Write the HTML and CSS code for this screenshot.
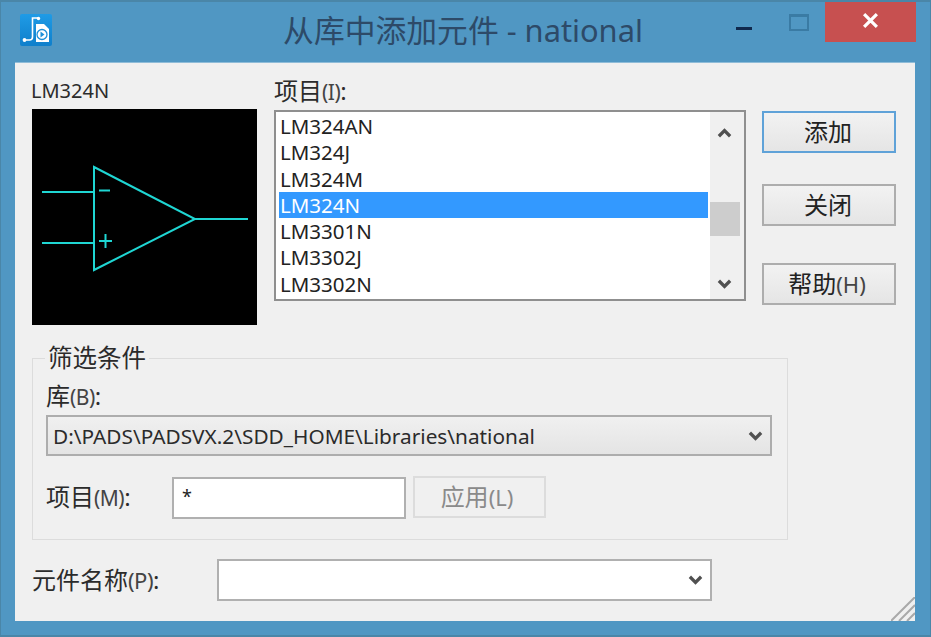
FILE: index.html
```html
<!DOCTYPE html>
<html lang="zh">
<head>
<meta charset="utf-8">
<title>从库中添加元件 - national</title>
<link rel="stylesheet" href="styles.css">
</head>
<body>
<div class="window">
  <header class="titlebar">
    <svg class="app-icon" viewBox="0 0 32 32" aria-hidden="true">
      <defs><linearGradient id="ig" x1="0" y1="0" x2="0" y2="1"><stop offset="0" stop-color="#1f9be6"/><stop offset="1" stop-color="#0f7fcb"/></linearGradient></defs>
      <rect width="32" height="32" rx="2" fill="url(#ig)"/>
      <path d="M18 4h-5.500v19q0 3-3 3H5" fill="none" stroke="#fff" stroke-width="1.600"/>
      <circle cx="18.500" cy="4.500" r="1.700" fill="#fff"/><circle cx="4.500" cy="26" r="1.900" fill="#fff"/>
      <path d="M16 10h8l5 5v13H16z" fill="#fff"/>
      <circle cx="22" cy="20.500" r="5" fill="none" stroke="#1c8fd8" stroke-width="1.300"/>
      <path d="M20.500 17.500l4 3-4 3z" fill="#1c8fd8"/>
    </svg>
    <h1 class="title">从库中添加元件 - national</h1>
    <div class="controls">
      <span class="ctl-min"></span>
      <span class="ctl-max"></span>
      <span class="ctl-close">
        <svg viewBox="0 0 16 14" width="17" height="15" aria-hidden="true"><path d="M2 1l12 12M14 1L2 13" stroke="#fff" stroke-width="3" fill="none"/></svg>
      </span>
    </div>
  </header>
  <main class="client">
    <section class="top">
      <div class="preview-col">
        <div class="label">LM324N</div>
        <svg class="preview" viewBox="0 0 225 216" aria-label="LM324N 符号">
          <g fill="none" stroke="#1fd6d3" stroke-width="2">
            <path d="M62 58L163 110L62 161Z"/>
            <path d="M10 83H62M10 134H62M163 110H216M67 81.500H78M67 132H80M73.500 125V139"/>
          </g>
        </svg>
      </div>
      <div class="list-col">
        <div class="label label-cjk">项目<span class="mn">(I)</span>:</div>
        <div class="listbox">
          <ul class="items">
            <li>LM324AN</li>
            <li>LM324J</li>
            <li>LM324M</li>
            <li class="selected">LM324N</li>
            <li>LM3301N</li>
            <li>LM3302J</li>
            <li>LM3302N</li>
          </ul>
          <div class="scrollbar">
            <svg class="sb-arrow" viewBox="0 0 16 10" aria-hidden="true"><path d="M2 8.500l6-6 6 6" fill="none" stroke="#505050" stroke-width="3.500"/></svg>
            <div class="thumb"></div>
            <svg class="sb-arrow" viewBox="0 0 16 10" aria-hidden="true"><path d="M2 1.500l6 6 6-6" fill="none" stroke="#505050" stroke-width="3.500"/></svg>
          </div>
        </div>
      </div>
      <div class="button-col">
        <button class="btn btn-default">添加</button>
        <button class="btn btn-close">关闭</button>
        <button class="btn btn-help">帮助<span class="mn">(H)</span></button>
      </div>
    </section>
    <fieldset class="group">
      <legend class="legend">筛选条件</legend>
      <div class="label label-cjk lib-label">库<span class="mn">(B)</span>:</div>
      <div class="select">
        <span class="select-text">D:\PADS\PADSVX.2\SDD_HOME\Libraries\national</span>
        <svg class="chev" viewBox="0 0 16 10" aria-hidden="true"><path d="M2 1.500l6 6 6-6" fill="none" stroke="#505050" stroke-width="3.500"/></svg>
      </div>
      <div class="filter-row">
        <div class="label label-cjk filter-label">项目<span class="mn">(M)</span>:</div>
        <div class="input">*</div>
        <button class="btn btn-apply" disabled>应用<span class="mn">(L)</span></button>
      </div>
    </fieldset>
    <section class="bottom">
      <div class="label label-cjk name-label">元件名称<span class="mn">(P)</span>:</div>
      <div class="combo">
        <svg class="chev" viewBox="0 0 16 10" aria-hidden="true"><path d="M2 1.500l6 6 6-6" fill="none" stroke="#505050" stroke-width="3.500"/></svg>
      </div>
    </section>
    <svg class="grip" viewBox="0 0 24 24" aria-hidden="true"><path d="M0 24L24 0M8 24L24 8M16 24L24 16" stroke="#a9a9a9" stroke-width="2" fill="none"/></svg>
  </main>
</div>
</body>
</html>
```

FILE: styles.css
```css
* { box-sizing: border-box; }
html, body { margin: 0; height: 100%; }
body {
  background: #5097c3;
  font-family: "Noto Sans", "Noto Sans CJK SC", sans-serif;
  color: #222;
  overflow: hidden;
}
.window {
  width: 931px;
  height: 637px;
  display: flex;
  flex-direction: column;
  border-top: 2px solid #4a86a8;
  border-bottom: 2px solid #4a86a8;
  border-left: 1px solid #4a86a8;
  border-right: 1px solid #4a86a8;
}
.titlebar {
  height: 60px;
  flex: none;
  position: relative;
  display: flex;
  justify-content: center;
  padding-top: 9px;
}
.app-icon {
  position: absolute;
  left: 19px;
  top: 12px;
  width: 32px;
  height: 32px;
}
.title {
  margin: 0 0 0 -5px;
  font-family: "Noto Sans", "Noto Sans CJK SC", sans-serif;
  font-weight: 400;
  font-size: 30.800px;
  line-height: 38px;
  color: #2d4a68;
}
.controls {
  position: absolute;
  right: 14px;
  top: 0;
  display: flex;
}
.ctl-min {
  width: 16px;
  height: 3px;
  background: #10294d;
  margin: 25px 37px 0 0;
}
.ctl-max {
  width: 20px;
  height: 17px;
  border: 2px solid #3a7ba4;
  border-top-width: 3px;
  margin: 12px 16px 0 0;
}
.ctl-close {
  width: 91px;
  height: 40px;
  background: #c75050;
  display: flex;
  align-items: center;
  justify-content: center;
  padding-bottom: 4px;
}
.client {
  flex: 1;
  margin: 0 15px 14px 14px;
  background: #f0f0f0;
  border-top: 1px solid #8fbcd8;
  padding: 0 17px;
  position: relative;
  display: flex;
  flex-direction: column;
}
.top {
  display: flex;
  height: 263px;
  flex: none;
}
.label {
  font-size: 20px;
  line-height: 24px;
  color: #2b2b2b;
}
.label-cjk { font-size: 24px; }
.mn { font-size: 21px; letter-spacing: -0.500px; color: #444; }
.preview-col {
  width: 243px;
  flex: none;
  padding-top: 16px;
  margin-left: -1px;
}
.preview {
  display: block;
  width: 225px;
  height: 216px;
  margin: 6px 0 0 1px;
  background: #000;
  border: 0;
}
.list-col {
  width: 472px;
  flex: none;
  padding-top: 16px;
}
.listbox {
  height: 191px;
  margin-top: 6px;
  border: 2px solid #8f8f8f;
  background: #fff;
  display: flex;
  padding: 2px;
}
.items {
  list-style: none;
  margin: -1px 0 0 1px;
  padding: 0;
  width: 429px;
  flex: none;
}
.items li {
  height: 26.300px;
  line-height: 26px;
  padding-left: 1px;
  font-size: 20.500px;
  color: #222;
  white-space: nowrap;
}
.items .selected {
  background: #3399ff;
  color: #fff;
}
.scrollbar {
  flex: 1;
  margin: -2px -2px -2px 2px;
  background: #f0f0f0;
  position: relative;
}
.thumb {
  position: absolute;
  left: 0;
  top: 90px;
  width: 30px;
  height: 34px;
  background: #cdcdcd;
}
.sb-arrow {
  position: absolute;
  left: 7px;
  width: 15px;
  height: 10px;
}
.sb-arrow:first-child { top: 16px; }
.sb-arrow:last-child { top: 167px; }
.button-col {
  width: 134px;
  margin-left: 16px;
  flex: none;
  display: flex;
  flex-direction: column;
  padding-top: 48px;
}
.btn {
  width: 134px;
  height: 42px;
  padding: 0 2px 0 0;
  border: 2px solid #adadad;
  background: linear-gradient(#f2f2f2, #e5e5e5);
  font-family: "Noto Sans", "Noto Sans CJK SC", sans-serif;
  font-size: 24px;
  line-height: 1;
  color: #222;
}
.btn .mn { font-size: 22px; letter-spacing: 0; }
.btn-default { border-color: #5fa2d8; }
.btn-close { margin-top: 31px; }
.btn-help { margin-top: 37px; padding-right: 4px; }
.group {
  margin: 16px 0 0;
  padding: 0 0 0 13px;
  width: 756px;
  height: 198px;
  border: 1px solid #dcdcdc;
  flex: none;
}
.legend {
  margin-left: -1px;
  padding: 0 3px;
  font-size: 24.500px;
  line-height: 32px;
  color: #2b2b2b;
}
.lib-label {
  line-height: 26px;
  margin: 9px 0 0;
}
.select {
  margin-top: 5px;
  width: 726px;
  height: 41px;
  border: 2px solid #adadad;
  background: linear-gradient(#f0f0f0, #e4e4e4);
  display: flex;
  align-items: center;
  justify-content: space-between;
  padding: 0 7px 0 5px;
  font-size: 20.800px;
}
.select-text { color: #2b2b2b; }
.chev { width: 15px; height: 10px; flex: none; }
.filter-row {
  display: flex;
  align-items: flex-start;
  margin-top: 20px;
}
.filter-label {
  width: 126px;
  line-height: 42px;
}
.input {
  width: 234px;
  height: 42px;
  margin-top: 1px;
  border: 2px solid #b0b0b0;
  background: #fff;
  padding: 4px 8px;
  font-size: 18px;
  line-height: 26px;
}
.btn-apply {
  width: 133px;
  margin-left: 7px;
  padding-right: 5px;
  border-color: #dcdcdc;
  background: #f0f0f0;
  color: #8a8a8a;
}
.btn-apply .mn { color: #8a8a8a; }
.bottom {
  display: flex;
  align-items: center;
  margin-top: 19px;
  height: 42px;
  flex: none;
}
.name-label {
  width: 185px;
  line-height: 42px;
}
.name-label .mn { font-size: 22px; }
.combo {
  width: 495px;
  height: 42px;
  border: 2px solid #b0b0b0;
  background: #fff;
  display: flex;
  align-items: center;
  justify-content: flex-end;
  padding-right: 7px;
}
.grip {
  position: absolute;
  right: 0;
  bottom: 0;
  width: 24px;
  height: 24px;
}
```
